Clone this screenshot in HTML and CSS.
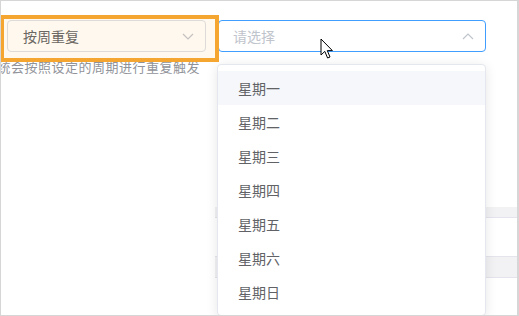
FILE: index.html
```html
<!DOCTYPE html>
<html lang="zh-CN">
<head>
    <meta charset="UTF-8">
    <meta name="viewport" content="width=device-width, initial-scale=1.0">
    <title>重复设置</title>
    <link rel="stylesheet" href="styles.css">
</head>
<body>
    <div class="frame">
        <div class="form-row">
            <div class="select select-mode">
                <span class="select-value">按周重复</span>
                <svg class="arrow" width="12" height="7" viewBox="0 0 12 7"><path d="M1 1 L6 6 L11 1" fill="none" stroke="#c0c4cc" stroke-width="1.2"/></svg>
            </div>
            <div class="select select-days is-focus">
                <span class="placeholder">请选择</span>
                <svg class="arrow" width="12" height="7" viewBox="0 0 12 7"><path d="M1 6 L6 1 L11 6" fill="none" stroke="#c0c4cc" stroke-width="1.2"/></svg>
            </div>
        </div>
        <div class="hint">系统会按照设定的周期进行重复触发</div>

        <div class="table-bg">
            <div class="tb-row tb-gap"></div>
            <div class="tb-row tb-head"></div>
            <div class="tb-row tb-body"></div>
            <div class="tb-row tb-head tb-small"></div>
        </div>

        <!-- dropdown of the focused select -->
        <ul class="dropdown">
            <li class="hover">星期一</li>
            <li>星期二</li>
            <li>星期三</li>
            <li>星期四</li>
            <li>星期五</li>
            <li>星期六</li>
            <li>星期日</li>
        </ul>

        <div class="highlight"></div>

        <svg class="cursor" width="14" height="22" viewBox="0 0 14 22">
            <path d="M1 1 L1 17 L4.8 13.4 L7.6 20 L10 19 L7.3 12.6 L12.4 12.6 Z" fill="#fff" stroke="#000" stroke-width="1" stroke-linejoin="round"/>
        </svg>
    </div>
</body>
</html>
```

FILE: styles.css
```css
* {
    box-sizing: border-box;
}
body {
    margin: 0;
    background-color: #fff;
    font-family: "Noto Sans CJK SC", "Liberation Sans", sans-serif;
}
.frame {
    position: relative;
    width: 519px;
    height: 316px;
    border: 1px solid #d6d6d6;
    border-right-width: 2px;
    overflow: hidden;
    background-color: #fff;
}
.form-row {
    display: flex;
    gap: 12px;
    padding: 19px 0 0 6px;
}
.select {
    display: flex;
    align-items: center;
    justify-content: space-between;
    height: 32px;
    padding: 0 11px 0 15px;
    border: 1px solid #dcdfe6;
    border-radius: 4px;
    font-size: 14px;
    background-color: #fff;
}
.select-mode {
    width: 199px;
    color: #606266;
}
.select-days {
    width: 268px;
    padding-left: 14px;
}
.select.is-focus {
    border-color: #409eff;
}
.placeholder {
    color: #c0c4cc;
}
.arrow {
    display: block;
}
.hint {
    margin: 5px 0 0 -17px;
    font-size: 13px;
    letter-spacing: 0.5px;
    line-height: 20px;
    color: #909399;
    white-space: nowrap;
}
.table-bg {
    margin-left: 214px;
}
.tb-row {
    border-bottom: 1px solid #e4e4ec;
}
.tb-gap {
    height: 130px;
    border-bottom: none;
}
.tb-head {
    height: 11px;
    background-color: #f2f2f4;
}
.tb-body {
    height: 39px;
}
.tb-small {
    height: 21px;
}
.dropdown {
    position: absolute;
    left: 216px;
    top: 63px;
    width: 269px;
    margin: 0;
    padding: 6px 0;
    list-style: none;
    background-color: #fff;
    border: 1px solid #e4e7ed;
    border-radius: 4px;
    box-shadow: 0 2px 12px rgba(0, 0, 0, 0.1);
}
.dropdown li {
    height: 34px;
    line-height: 34px;
    padding-left: 20px;
    font-size: 14px;
    color: #606266;
}
.dropdown li.hover {
    background-color: #f5f7fa;
}
.highlight {
    position: absolute;
    left: -1px;
    top: 14px;
    width: 219px;
    height: 47px;
    border: 4px solid #f5a630;
    background-color: rgba(245, 166, 48, 0.08);
}
.cursor {
    position: absolute;
    left: 319px;
    top: 37px;
}
```
